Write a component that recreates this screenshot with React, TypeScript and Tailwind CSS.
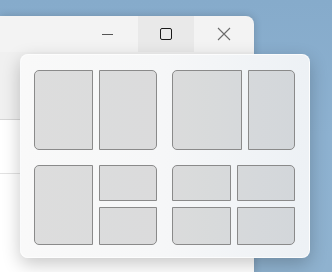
import React from 'react';

const tile = 'bg-black/[0.11] border border-[#8a8a8a]';

const SnapFlyout: React.FC = () => {
    return (
        <div className="absolute left-[20px] top-[54px] w-[290px] h-[204px] rounded-lg border border-white/70 bg-gradient-to-r from-[#f9f9f9] via-[#f6f7f8] to-[#edf1f5] shadow-[0_6px_18px_rgba(0,0,0,0.22)] pl-[13px] pt-[15px] pr-[14px] pb-[12px]">
            <div className="grid grid-cols-2 gap-x-[15px] gap-y-[15px]">
                <div className="flex gap-[6px] h-[80px]">
                    <div className={`${tile} w-[59px] rounded-l-[5px]`} />
                    <div className={`${tile} flex-1 rounded-r-[5px]`} />
                </div>
                <div className="flex gap-[6px] h-[80px]">
                    <div className={`${tile} w-[70px] rounded-l-[5px]`} />
                    <div className={`${tile} flex-1 rounded-r-[5px]`} />
                </div>
                <div className="flex gap-[6px] h-[80px]">
                    <div className={`${tile} w-[59px] rounded-l-[5px]`} />
                    <div className="flex-1 flex flex-col gap-[6px]">
                        <div className={`${tile} h-[36px] rounded-tr-[5px]`} />
                        <div className={`${tile} flex-1 rounded-br-[5px]`} />
                    </div>
                </div>
                <div className="grid grid-cols-2 grid-rows-[36px_1fr] gap-[6px] h-[80px]">
                    <div className={`${tile} rounded-tl-[5px]`} />
                    <div className={`${tile} rounded-tr-[5px]`} />
                    <div className={`${tile} rounded-bl-[5px]`} />
                    <div className={`${tile} rounded-br-[5px]`} />
                </div>
            </div>
        </div>
    );
};

const App: React.FC = () => {
    return (
        <div className="relative w-[332px] h-[272px] overflow-hidden bg-gradient-to-b from-[#86abcb] via-[#8db1d0] to-[#8fb2cf]">
            <div className="absolute left-0 top-[16px] w-[254px] h-[260px] rounded-tr-lg bg-[#f3f3f3] shadow-[0_0_8px_rgba(0,0,0,0.18)] flex flex-col">
                <div className="flex justify-end h-[36px]">
                    <div className="w-[56px] flex items-center justify-center pr-[6px]">
                        <div className="w-[11px] h-px bg-[#555]" />
                    </div>
                    <div className="w-[56px] flex items-center justify-center bg-[#e9e9e9] pr-[1px]">
                        <div className="w-[12px] h-[12px] border-[1.5px] border-[#1a1a1a] rounded-[2px]" />
                    </div>
                    <div className="w-[60px] flex items-center justify-center rounded-tr-lg pr-[1px]">
                        <svg width="14" height="14" viewBox="0 0 14 14">
                            <path d="M1 1 L13 13 M13 1 L1 13" stroke="#6b6b6b" strokeWidth="1.1" fill="none" />
                        </svg>
                    </div>
                </div>
                <div className="flex-1 flex flex-col">
                    <div className="h-[68px] bg-[#f0f0f0] border-b border-[#d6d6d6]" />
                    <div className="h-[54px] bg-white border-b border-[#e2e2e2]" />
                    <div className="flex-1 bg-white" />
                </div>
            </div>
            <SnapFlyout />
        </div>
    );
};

export default App;
